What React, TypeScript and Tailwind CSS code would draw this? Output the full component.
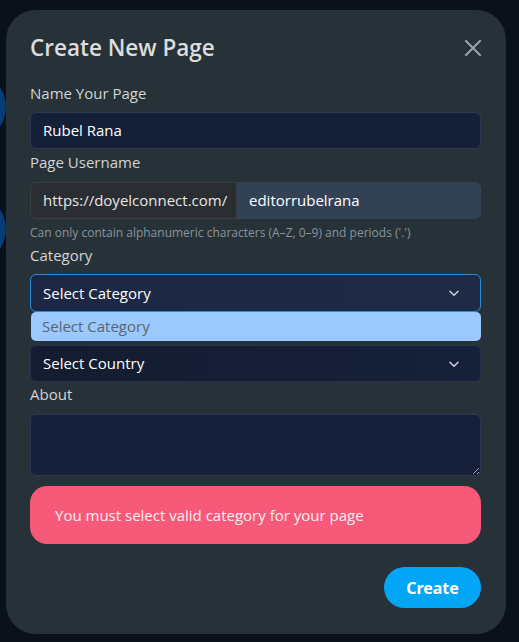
import React from "react";

const font = { fontFamily: '"Open Sans", "Noto Sans", sans-serif' };

function Chevron() {
  return (
    <svg width="14" height="14" viewBox="0 0 24 24" fill="none" stroke="#cbd5e1" strokeWidth="2.5" strokeLinecap="round" strokeLinejoin="round">
      <path d="M5 9l7 7 7-7" />
    </svg>
  );
}

export default function App() {
  return (
    <div className="relative w-[519px] h-[642px] bg-[#0b111b] overflow-hidden" style={font}>
      <div className="absolute left-[-64px] top-[72px] w-[70px] h-[70px] rounded-full bg-[#083c74]" />
      <div className="absolute left-[-64px] top-[194px] w-[70px] h-[70px] rounded-full bg-[#083c74]" />
      <div className="absolute left-[6px] top-[10px] w-[500px] h-[624px] rounded-[30px] bg-[#263238] pl-[24px] pr-[25px] pt-[20px] flex flex-col">
        <div className="flex items-center justify-between h-[36px]">
          <h1 className="text-[22.5px] font-semibold text-[#dcdcdc] leading-[36px]">Create New Page</h1>
          <svg width="18" height="18" viewBox="0 0 18 18" className="mr-[-1px]" stroke="#9aa3ab" strokeWidth="2" strokeLinecap="square">
            <path d="M2 2L16 16M16 2L2 16" />
          </svg>
        </div>

        <label className="mt-[15px] text-[15px] leading-[24px] text-[#d4d4d4] mb-[7px]">Name Your Page</label>
        <div className="h-[37px] rounded-[6px] border border-[#2b3a52] bg-[#151f38] px-[12px] flex items-center text-[15px] text-white">Rubel Rana</div>

        <label className="mt-[1px] text-[15px] leading-[24px] text-[#d4d4d4] mb-[8px]">Page Username</label>
        <div className="flex h-[37px] text-[15px]">
          <div className="w-[207px] rounded-l-[6px] border border-[#3a3f45] bg-[#2a2d31] px-[12px] flex items-center text-[#e6e6e6]">https://doyelconnect.com/</div>
          <div className="flex-1 rounded-r-[6px] bg-[#334155] px-[12px] flex items-center text-white">editorrubelrana</div>
        </div>
        <p className="mt-[6px] text-[12px] leading-[16px] text-[#8a939c]">Can only contain alphanumeric characters (A–Z, 0–9) and periods ('.')</p>

        <label className="mt-[2px] text-[15px] leading-[24px] text-[#d4d4d4] mb-[7px]">Category</label>
        <div className="relative">
          <div className="h-[38px] rounded-[6px] border border-[#2d8ad8] bg-gradient-to-r from-[#1b2744] to-[#1f2b45] px-[12px] flex items-center justify-between text-[15px] text-white">
            <span>Select Category</span>
            <span className="mr-[7px]"><Chevron /></span>
          </div>
          <div className="absolute left-[1px] right-0 top-[38px] z-10 h-[29px] rounded-[5px] bg-[#9bc8fd] px-[11px] flex items-center text-[15px] text-[#5b6571]">Select Category</div>
        </div>

        <div className="mt-[1px] h-[24px] mb-[8px]" />
        <div className="h-[37px] rounded-[6px] border border-[#25324a] bg-gradient-to-r from-[#131c30] to-[#16203a] px-[12px] flex items-center justify-between text-[15px] text-white">
          <span>Select Country</span>
          <span className="mr-[7px]"><Chevron /></span>
        </div>

        <label className="text-[15px] leading-[24px] text-[#d4d4d4] mb-[8px]">About</label>
        <textarea className="h-[62px] rounded-[6px] border border-[#2b3a52] bg-[#16203a] text-white outline-none" />

        <div className="mt-[10px] h-[58px] rounded-[17px] bg-[#f75a78] pl-[25px] flex items-center text-[15px] text-[#fdeef1]">
          You must select valid category for your page
        </div>

        <div className="mt-[23px] flex justify-end">
          <button className="w-[97px] h-[41px] rounded-full bg-[#03a6f4] text-white text-[16px] font-bold" style={{ fontFamily: '"Noto Sans", sans-serif' }}>Create</button>
        </div>
      </div>
    </div>
  );
}
